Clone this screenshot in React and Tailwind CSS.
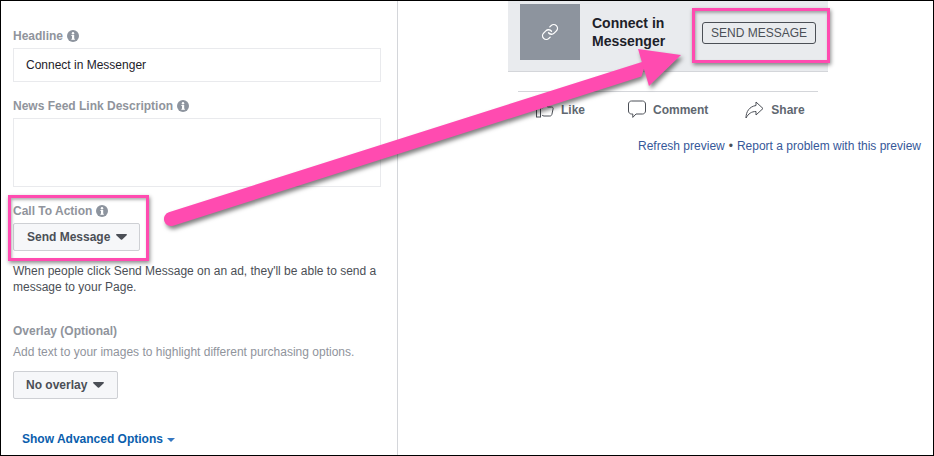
import { Link } from 'lucide-react';

function InfoIcon() {
  return (
    <svg width="12" height="12" viewBox="0 0 12 12" className="ml-[4px] shrink-0">
      <circle cx="6" cy="6" r="6" fill="#8d949e" />
      <rect x="5" y="5" width="2.2" height="4.4" fill="#fff" />
      <rect x="4.3" y="5" width="1" height="0.9" fill="#fff" />
      <rect x="4.3" y="8.8" width="3.6" height="0.9" fill="#fff" />
      <circle cx="6" cy="3.2" r="1.2" fill="#fff" />
    </svg>
  );
}

function Caret({ className }) {
  return (
    <svg width="11" height="6" viewBox="0 0 11 6" className={className}>
      <path d="M0.8 0h9.400c.7 0 1 .7.5 1.200L6.200 5.400a1 1 0 0 1-1.400 0L.3 1.200C-.2.700.1 0 .8 0z" fill="#4b4f56" />
    </svg>
  );
}

function Label({ children, info, className = '' }) {
  return (
    <div className={`flex items-center h-[14px] text-[12px] font-bold text-[#90949c] ${className}`}>
      {children}
      {info && <InfoIcon />}
    </div>
  );
}

function SelectButton({ children, className = '' }) {
  return (
    <div className={`flex items-center h-[28px] border border-[#ced0d4] rounded-[2px] bg-[#f6f7f9] text-[12px] font-bold text-[#4b4f56] ${className}`}>
      {children}
      <Caret className="ml-[6px]" />
    </div>
  );
}

function LeftPanel() {
  return (
    <div className="w-[397px] h-full shrink-0 border-r border-[#d4d6da] pl-[12px] pr-[16px] pt-[28px]">
      <Label info>Headline</Label>
      <div className="mt-[5px] h-[34px] border border-[#e9eaed] flex items-center pl-[12px] text-[12px] text-[#1d2129]">
        Connect in Messenger
      </div>
      <Label info className="mt-[17px]">News Feed Link Description</Label>
      <div className="mt-[5px] h-[69px] border border-[#e9eaed]" />
      <Label info className="mt-[17px]">Call To Action</Label>
      <SelectButton className="mt-[5px] w-[127px] pl-[13px]">Send Message</SelectButton>
      <p className="mt-[12px] text-[12px] leading-[16px] text-[#4b4f56]">
        When people click Send Message on an ad, they'll be able to send a message to your Page.
      </p>
      <Label className="mt-[29px]">Overlay (Optional)</Label>
      <p className="mt-[6px] text-[12px] leading-[16px] text-[#90949c]">
        Add text to your images to highlight different purchasing options.
      </p>
      <SelectButton className="mt-[11px] w-[105px] pl-[12px]">No overlay</SelectButton>
      <div className="mt-[31px] ml-[9px] flex items-center text-[12px] font-bold text-[#0a5ead]">
        Show Advanced Options
        <svg width="8" height="4" viewBox="0 0 8 4" className="ml-[4px] mt-[1px]">
          <path d="M0 0h8L4 4z" fill="#3578c2" />
        </svg>
      </div>
    </div>
  );
}

function LikeIcon() {
  return (
    <svg width="18" height="17" viewBox="0 0 18 17" fill="none" stroke="#4b4f56" strokeWidth="1">
      <rect x="0.500" y="6.500" width="4" height="9.500" />
      <path d="M6 7.500l3.500-3.500 1-3.500c1.500 0 2 1.200 1.600 3L11.500 6h4.200c1 0 1.600.8 1.400 1.800l-1.200 5.600c-.2 1-1 1.600-2 1.600H8c-1 0-1.500-.4-2-1" />
    </svg>
  );
}

function CommentIcon() {
  return (
    <svg width="18" height="19" viewBox="0 0 18 19" fill="none" stroke="#4b4f56" strokeWidth="1">
      <path d="M3.500 1h11c1.500 0 3 1.200 3 3v7c0 1.800-1.500 3-3 3H8l-3.200 3.400V14H3.500C2 14 .5 12.800.5 11V4C.5 2.200 2 1 3.500 1z" />
    </svg>
  );
}

function ShareIcon() {
  return (
    <svg width="19" height="18" viewBox="0 0 19 18" fill="none" stroke="#4b4f56" strokeWidth="1">
      <path d="M11 1l7 6.500-7 6.500v-3.500C6.500 10.500 3.500 12.500 1 17c0-6.500 3.500-11.500 10-12.500z" />
    </svg>
  );
}

function Action({ icon, label, className = '' }) {
  return (
    <div className={`flex items-center text-[12px] font-bold text-[#606770] ${className}`}>
      {icon}
      <span className="ml-[7px]">{label}</span>
    </div>
  );
}

function RightPanel() {
  return (
    <div className="flex-1 h-full">
      <div className="ml-[110px] w-[320px] h-[71px] bg-[#e9ebee] border-b border-[#d4d6da] flex pl-[12px] pt-[3px]">
        <div className="w-[60px] h-[56px] bg-[#8d949e] flex items-center justify-center">
          <Link size={18} color="#fff" strokeWidth={1.75} />
        </div>
        <div className="ml-[12px] w-[100px] pt-[10px] text-[14px] leading-[18px] font-bold text-[#1d2129]">
          Connect in Messenger
        </div>
        <div className="ml-[10px] mt-[18px] w-[114px] h-[22px] border border-[#4b4f56] rounded-[3px] flex items-center justify-center text-[12px] text-[#4b4f56]">
          SEND MESSAGE
        </div>
      </div>
      <div className="ml-[120px] w-[300px] mt-[19px] border-t border-[#d4d6da] flex pl-[18px] pt-[8px]">
        <Action icon={<LikeIcon />} label="Like" />
        <Action icon={<CommentIcon />} label="Comment" className="ml-[43px]" />
        <Action icon={<ShareIcon />} label="Share" className="ml-[37px]" />
      </div>
      <div className="mt-[20px] pr-[12px] flex justify-end text-[12px] leading-[14px] text-[#365899]">
        <span>Refresh preview</span>
        <span className="text-[#4b4f56] mx-[4px]">•</span>
        <span>Report a problem with this preview</span>
      </div>
    </div>
  );
}

function Callouts() {
  return (
    <>
      <div className="absolute left-[7px] top-[194px] w-[141px] h-[66px] border-[3px] border-[#ff4bb0] shadow-[1px_2px_4px_rgba(0,0,0,0.45),inset_1px_2px_3px_rgba(0,0,0,0.3)]" />
      <div className="absolute left-[691px] top-[7px] w-[138px] h-[55px] border-[3px] border-[#ff4bb0] shadow-[1px_2px_4px_rgba(0,0,0,0.45),inset_1px_2px_3px_rgba(0,0,0,0.3)]" />
      <svg width="934" height="456" viewBox="0 0 934 456" className="absolute left-[-1px] top-[-1px] pointer-events-none drop-shadow-[2px_3px_2px_rgba(0,0,0,0.5)]">
        <path d="M168.800 212.300L646.600 60.400L641.400 76.600L173.200 225.700A7 7 0 0 1 168.800 212.300z" fill="#ff4bb0" />
        <path d="M638 49L681 55L649 86z" fill="#ff4bb0" />
      </svg>
    </>
  );
}

export default function App() {
  return (
    <div className="relative w-[934px] h-[456px] overflow-hidden bg-white border border-black flex font-['Liberation_Sans',Arial,sans-serif]">
      <LeftPanel />
      <RightPanel />
      <Callouts />
    </div>
  );
}
